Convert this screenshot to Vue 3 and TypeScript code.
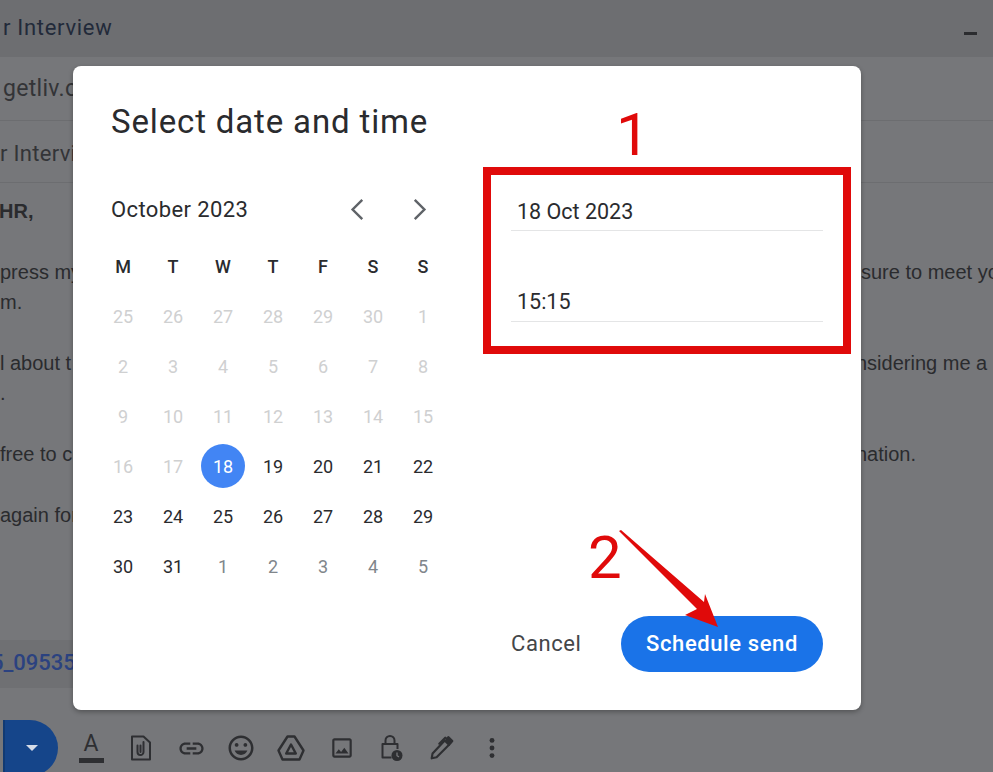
<template>
  <div class="page">
    <!-- compose window behind the dialog -->
    <div class="compose">
      <div class="compose-head">
        <span>r Interview</span>
        <span class="minimize"></span>
      </div>
      <div class="compose-row recipients">getliv.c</div>
      <div class="compose-row subject">r Interview</div>
      <div class="compose-body">
        <div v-for="(line, i) in bodyLines" :key="i" :class="['line', { bold: i === 0 }]">
          <span class="line-left">{{ line.left }}</span>
          <span :class="['line-right', { tucked: line.tucked }]">{{ line.right }}</span>
        </div>
      </div>
      <div class="attachment"><span>5_09535</span></div>
      <div class="compose-tools">
        <div class="send-btn"><span class="send-caret"></span></div>
        <div class="tool text-tool">
          <span class="tool-a">A</span>
          <span class="tool-bar"></span>
        </div>
        <div class="tool">
          <svg viewBox="0 0 20 26" width="20" height="26" fill="none" stroke="currentColor" stroke-width="2" stroke-linejoin="round">
            <path d="M1 1.500h11.500l6.500 6v17H1z" />
            <path d="M12.500 7v10a3 3 0 0 1-6 0v-6.500M9.500 10.500V17" stroke-linecap="round" />
          </svg>
        </div>
        <div class="tool">
          <svg viewBox="0 0 24 24" width="29" height="29" fill="currentColor">
            <path d="M3.900 12c0-1.710 1.390-3.100 3.100-3.100h4V7H7c-2.760 0-5 2.240-5 5s2.240 5 5 5h4v-1.900H7c-1.710 0-3.100-1.390-3.100-3.100zM8 13h8v-2H8v2zm9-6h-4v1.900h4c1.710 0 3.100 1.390 3.100 3.100s-1.390 3.100-3.100 3.100h-4V17h4c2.760 0 5-2.240 5-5s-2.240-5-5-5z" />
          </svg>
        </div>
        <div class="tool">
          <svg viewBox="0 0 24 24" width="30" height="30" fill="currentColor">
            <path d="M11.990 2C6.470 2 2 6.480 2 12s4.470 10 9.990 10C17.520 22 22 17.520 22 12S17.520 2 11.990 2zM12 20c-4.420 0-8-3.580-8-8s3.580-8 8-8 8 3.580 8 8-3.580 8-8 8zm3.500-9c.830 0 1.500-.670 1.500-1.500S16.330 8 15.500 8 14 8.670 14 9.500s.670 1.500 1.500 1.500zm-7 0c.830 0 1.500-.670 1.500-1.500S9.330 8 8.500 8 7 8.670 7 9.500 7.670 11 8.500 11zm3.500 6.500c2.330 0 4.310-1.460 5.110-3.500H6.890c.800 2.040 2.780 3.500 5.110 3.500z" />
          </svg>
        </div>
        <div class="tool">
          <svg viewBox="0 0 28 26" width="28" height="26" fill="none" stroke="currentColor" stroke-width="2.400" stroke-linejoin="round">
            <path d="M10.500 1.500h7l9 14-4 9H5.500l-4-9z" />
            <path d="M14 9.500l4.800 9H9.200z" />
          </svg>
        </div>
        <div class="tool">
          <svg viewBox="0 0 24 24" width="26" height="26" fill="currentColor">
            <path d="M19 5v14H5V5h14m0-2H5c-1.100 0-2 .900-2 2v14c0 1.100.900 2 2 2h14c1.100 0 2-.900 2-2V5c0-1.100-.900-2-2-2zm-4.860 8.860l-3 3.870L9 13.140 6 17h12l-3.860-5.140z" />
          </svg>
        </div>
        <div class="tool">
          <svg viewBox="0 0 22 28" width="22" height="28" fill="none" stroke="currentColor" stroke-width="2">
            <path d="M10.500 23.500H1.500V10h15v5" stroke-linejoin="round" />
            <path d="M4.500 10V6.500a4.500 4.500 0 0 1 9 0V10" />
            <circle cx="16" cy="21.500" r="5.500" fill="currentColor" stroke="none" />
            <path d="M16 18.500v3.200l2 1.200" stroke="#76777a" stroke-width="1.300" />
          </svg>
        </div>
        <div class="tool">
          <svg viewBox="0 0 24 24" width="26" height="26" fill="none" stroke="currentColor" stroke-width="2" stroke-linejoin="round">
            <path d="M2.500 21.500l.800-4.500L14.500 5l4 4L7 20.500z" />
            <path d="M16 3.500l2-1.500 3.500 3.500-3 3.500z" fill="currentColor" />
            <path d="M9.500 8L15 2.500" stroke-linecap="round" />
          </svg>
        </div>
        <div class="tool">
          <svg viewBox="0 0 24 24" width="28" height="28" fill="currentColor">
            <circle cx="12" cy="5.500" r="2.100" />
            <circle cx="12" cy="12" r="2.100" />
            <circle cx="12" cy="18.500" r="2.100" />
          </svg>
        </div>
      </div>
    </div>

    <!-- dialog -->
    <div class="dialog">
      <h1 class="dialog-title">Select date and time</h1>
      <div class="dialog-main">
        <div class="calendar">
          <div class="month-row">
            <span class="month-name">October 2023</span>
            <div class="month-nav">
              <svg viewBox="0 0 16 26" width="14" height="23" fill="none" stroke="#5f6368" stroke-width="2.800">
                <path d="M14 2L3 13l11 11" />
              </svg>
              <svg viewBox="0 0 16 26" width="14" height="23" fill="none" stroke="#5f6368" stroke-width="2.800">
                <path d="M2 2l11 11L2 24" />
              </svg>
            </div>
          </div>
          <div class="grid">
            <div v-for="(d, i) in weekDays" :key="'w' + i" class="cell weekday">{{ d }}</div>
            <div v-for="day in days" :key="day.id" :class="['cell', day.kind]">
              <span class="day-num">{{ day.n }}</span>
            </div>
          </div>
        </div>
        <div class="side">
          <div class="field date-field">18 Oct 2023</div>
          <div class="field time-field">15:15</div>
          <div class="actions">
            <span class="cancel">Cancel</span>
            <button class="schedule">Schedule send</button>
          </div>
        </div>
      </div>
    </div>

    <!-- red annotations drawn on top of the screenshot -->
    <div class="mark-box"></div>
    <span class="mark-num one">1</span>
    <span class="mark-num two">2</span>
    <svg class="mark-arrow" viewBox="0 0 104 100" width="104" height="100">
      <path d="M1 1L79 79 67 85 100 97 87 64 86 72 3 0z" fill="#e00a0a" />
    </svg>
  </div>
</template>

<script setup lang="ts">
type DayKind = "past" | "current" | "next" | "selected";

interface Day {
  id: string;
  n: number;
  kind: DayKind;
}

interface BodyLine {
  left: string;
  right?: string;
  tucked?: boolean;
}

const weekDays = ["M", "T", "W", "T", "F", "S", "S"];

const bodyLines: BodyLine[] = [
  { left: "HR," },
  { left: "" },
  { left: "press my", right: "sure to meet yo" },
  { left: "m." },
  { left: "" },
  { left: "l about t", right: "nsidering me a", tucked: true },
  { left: "." },
  { left: "" },
  { left: "free to c", right: "nation.", tucked: true },
  { left: "" },
  { left: "again for" },
];

const days: Day[] = [];
const push = (from: number, to: number, kind: DayKind) => {
  for (let n = from; n <= to; n++) days.push({ id: kind + days.length, n, kind });
};
push(25, 30, "past");
push(1, 17, "past");
push(18, 18, "selected");
push(19, 31, "current");
push(1, 5, "next");
</script>

<style>
html,
body {
  background: #76777a;
}
</style>

<style scoped>
.page {
  position: relative;
  width: 993px;
  height: 772px;
  overflow: hidden;
  background: #76777a;
  font-family: "Liberation Sans", Arial, sans-serif;
}

.compose {
  display: flex;
  flex-direction: column;
  height: 772px;
  color: #2a2b2e;
}

.compose-head {
  display: flex;
  justify-content: space-between;
  align-items: center;
  height: 54px;
  padding: 0 16px 3px 3px;
  background: #6d6e71;
  font-family: Roboto, sans-serif;
  font-size: 22px;
  letter-spacing: 0.7px;
  color: #222a3a;
}

.minimize {
  width: 13px;
  height: 3px;
  margin-top: 12px;
  background: #2b2c2f;
}

.compose-row {
  display: flex;
  align-items: center;
  box-sizing: border-box;
  padding-left: 3px;
  font-family: Roboto, sans-serif;
  font-size: 23px;
  letter-spacing: 0.3px;
  color: #333437;
  border-bottom: 1px solid #6c6d70;
}

.recipients {
  height: 64px;
}

.subject {
  height: 62px;
  padding: 3px 0 0;
  font-size: 22px;
}

.compose-body {
  padding-top: 13px;
  font-size: 20px;
}

.line {
  display: flex;
  height: 30.4px;
  line-height: 30.4px;
  white-space: nowrap;
}

.line-left {
  width: 861px;
  flex-shrink: 0;
}

.tucked {
  margin-left: -5px;
}

.line.bold {
  font-weight: 700;
  margin-left: -1px;
}

.attachment {
  width: 90px;
  height: 48px;
  margin-top: 110px;
  background: #6f7073;
  color: #2b4280;
  font-family: Roboto, sans-serif;
  font-size: 22px;
  font-weight: 500;
  line-height: 46px;
  white-space: nowrap;
  overflow: hidden;
}

.attachment span {
  margin-left: -9px;
}

.compose-tools {
  display: flex;
  align-items: center;
  height: 56px;
  margin-top: auto;
  margin-bottom: -4px;
}

.send-btn {
  display: flex;
  align-items: center;
  justify-content: center;
  width: 55px;
  height: 56px;
  margin-left: 3px;
  margin-right: 8px;
  background: #15458a;
  border-left: 2px solid #103a73;
  border-radius: 0 28px 28px 0;
  box-sizing: border-box;
}

.send-caret {
  width: 0;
  height: 0;
  margin-bottom: 1px;
  border-left: 6px solid transparent;
  border-right: 6px solid transparent;
  border-top: 6px solid #d5dce8;
}

.tool {
  display: flex;
  align-items: center;
  justify-content: center;
  width: 50.100px;
  height: 50px;
  color: #2e2f32;
}

.text-tool {
  flex-direction: column;
}

.tool-a {
  font-family: Roboto, sans-serif;
  font-size: 23px;
  line-height: 21px;
}

.tool-bar {
  width: 25px;
  height: 5px;
  margin-top: 4px;
  background: #2e2f32;
}

.dialog {
  position: absolute;
  left: 73px;
  top: 66px;
  width: 788px;
  height: 644px;
  box-sizing: border-box;
  display: flex;
  flex-direction: column;
  padding: 0 38px 38px;
  background: #ffffff;
  border-radius: 8px;
  box-shadow: 0 2px 5px rgba(0, 0, 0, 0.3);
  font-family: Roboto, sans-serif;
  color: #2a2b2e;
}

.dialog-title {
  margin: 33px 0 0;
  font-size: 33px;
  font-weight: 400;
  letter-spacing: 0.85px;
  line-height: 46px;
}

.dialog-main {
  display: flex;
  flex: 1;
  gap: 63px;
}

.calendar {
  width: 337px;
}

.month-row {
  display: flex;
  justify-content: space-between;
  align-items: center;
  height: 32px;
  margin-top: 48px;
}

.month-name {
  font-size: 22px;
  letter-spacing: 0.4px;
}

.month-nav {
  display: flex;
  gap: 49px;
  padding-right: 21px;
}

.grid {
  display: grid;
  grid-template-columns: repeat(7, 50px);
  grid-auto-rows: 50px;
  margin: 16px 0 0 -13px;
}

.cell {
  display: flex;
  align-items: center;
  justify-content: center;
  font-size: 18px;
}

.weekday {
  font-weight: 500;
}

.past {
  color: #cfd0d1;
}

.current {
  color: #2a2b2e;
}

.next {
  color: #80868b;
}

.selected {
  color: #ffffff;
}

.selected .day-num {
  display: flex;
  align-items: center;
  justify-content: center;
  width: 44px;
  height: 44px;
  border-radius: 50%;
  background: #4285f4;
}

.side {
  display: flex;
  flex-direction: column;
  flex: 1;
}

.field {
  height: 37px;
  padding-left: 6px;
  font-size: 21.500px;
  line-height: 36px;
  border-bottom: 1px solid #e4e5e6;
}

.date-field {
  margin-top: 48px;
  line-height: 38px;
}

.time-field {
  margin-top: 53px;
}

.actions {
  display: flex;
  align-items: center;
  justify-content: space-between;
  margin-top: auto;
}

.cancel {
  font-size: 22px;
  line-height: 24px;
  letter-spacing: 0.6px;
  color: #444649;
}

.schedule {
  width: 202px;
  height: 56px;
  padding: 0 0 2px;
  border: none;
  border-radius: 28px;
  background: #1a73e8;
  color: #ffffff;
  font-family: Roboto, sans-serif;
  font-size: 22px;
  font-weight: 500;
  letter-spacing: 0.6px;
}

.mark-box {
  position: absolute;
  left: 483px;
  top: 167px;
  width: 368px;
  height: 187px;
  box-sizing: border-box;
  border: 8px solid #e00a0a;
}

.mark-num {
  position: absolute;
  font-family: Roboto, sans-serif;
  font-size: 60px;
  line-height: 60px;
  color: #e00a0a;
}

.one {
  left: 616px;
  top: 105px;
}

.two {
  left: 588px;
  top: 528px;
}

.mark-arrow {
  position: absolute;
  left: 618px;
  top: 530px;
}
</style>
